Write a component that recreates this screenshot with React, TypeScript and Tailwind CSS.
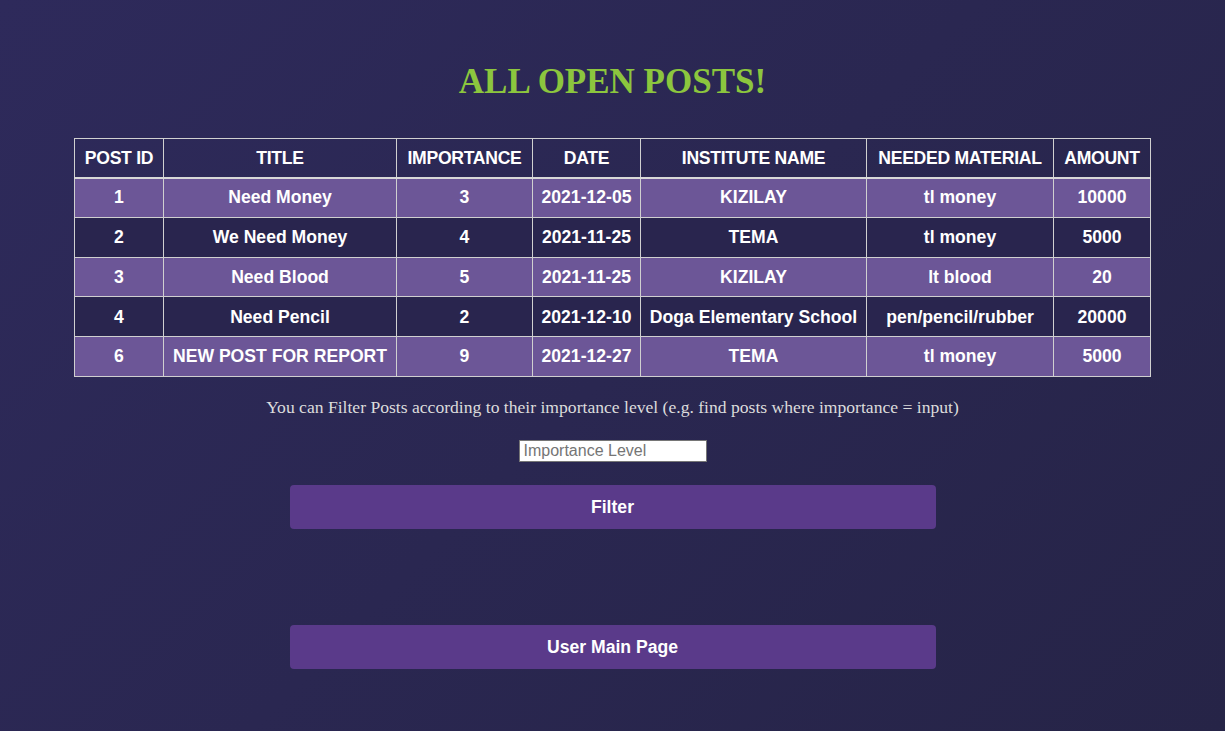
import React from "react";

const rows = [
  ["1", "Need Money", "3", "2021-12-05", "KIZILAY", "tl money", "10000"],
  ["2", "We Need Money", "4", "2021-11-25", "TEMA", "tl money", "5000"],
  ["3", "Need Blood", "5", "2021-11-25", "KIZILAY", "lt blood", "20"],
  ["4", "Need Pencil", "2", "2021-12-10", "Doga Elementary School", "pen/pencil/rubber", "20000"],
  ["6", "NEW POST FOR REPORT", "9", "2021-12-27", "TEMA", "tl money", "5000"],
];

const headers = ["POST ID", "TITLE", "IMPORTANCE", "DATE", "INSTITUTE NAME", "NEEDED MATERIAL", "AMOUNT"];
const widths = ["w-[89px]", "w-[233px]", "w-[136px]", "w-[108px]", "w-[226px]", "w-[187px]", "w-[97px]"];

export default function App() {
  return (
    <div className="min-h-[731px] w-full bg-[linear-gradient(135deg,#2e2a5b_0%,#262447_100%)] flex flex-col items-center font-['Liberation_Sans',Arial,sans-serif]">
      <h1 className="mt-[60px] h-[44px] text-[35px] leading-[44px] font-bold text-[#8cc63e] font-['Liberation_Serif','Times_New_Roman',serif]">
        ALL OPEN POSTS!
      </h1>
      <table className="mt-[34px] w-[1077px] border-collapse text-white text-[17.6px] font-bold text-center table-fixed">
        <thead>
          <tr className="h-[39px] border-b-2 border-[#d8d8d8]">
            {headers.map((h, i) => (
              <th key={h} className={`${widths[i]} border border-[#d0d0d0] px-1 font-bold whitespace-nowrap tracking-[-0.3px]`}>
                {h}
              </th>
            ))}
          </tr>
        </thead>
        <tbody>
          {rows.map((r, ri) => (
            <tr key={ri} className={`h-[39.8px] ${ri % 2 === 0 ? "bg-[#6c5697]" : "bg-[#29254e]"}`}>
              {r.map((c, ci) => (
                <td key={ci} className="border border-[#d0d0d0] px-1 whitespace-nowrap">
                  {c}
                </td>
              ))}
            </tr>
          ))}
        </tbody>
      </table>
      <p className="mt-[19px] text-[17.6px] leading-[22px] text-[#dcdcdc] font-['Liberation_Serif','Times_New_Roman',serif]">
        You can Filter Posts according to their importance level (e.g. find posts where importance = input)
      </p>
      <input
        className="mt-[22px] w-[188px] h-[22px] bg-white border border-[#767676] px-[4px] text-[16px] leading-[20px] text-black placeholder:text-[#757575] outline-none"
        placeholder="Importance Level"
      />
      <button className="mt-[23px] w-[646px] h-[44px] rounded-[4px] bg-[#5a3a8a] text-white text-[17.6px] font-bold">
        Filter
      </button>
      <button className="mt-[96px] w-[646px] h-[44px] rounded-[4px] bg-[#5a3a8a] text-white text-[17.6px] font-bold">
        User Main Page
      </button>
    </div>
  );
}
